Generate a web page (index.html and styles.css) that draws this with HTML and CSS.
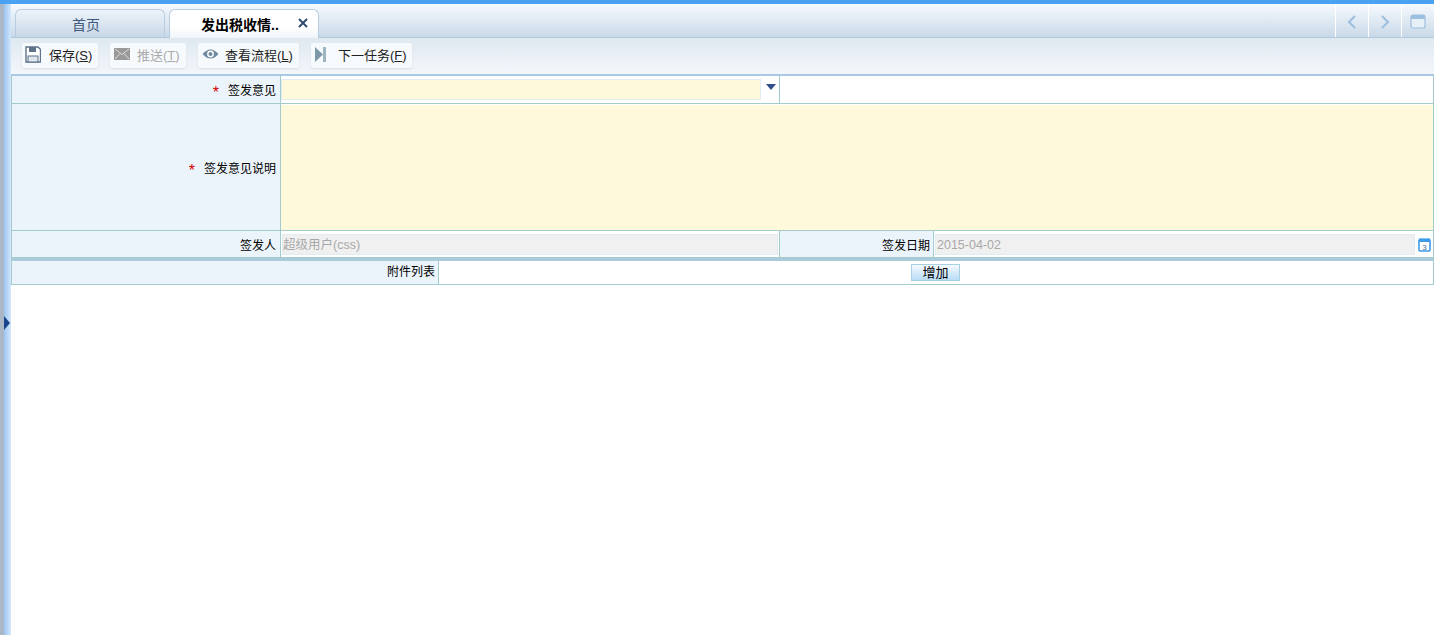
FILE: index.html
```html
<!DOCTYPE html>
<html lang="zh-CN">
<head>
    <meta charset="UTF-8">
    <title>发出税收情况</title>
    <link rel="stylesheet" href="styles.css">
</head>
<body>
    <div class="topline"></div>
    <div class="page">
        <div class="side">
            <span class="side-arrow"></span>
        </div>
        <div class="main">
            <div class="tabbar">
                <div class="tab">首页</div>
                <div class="tab active">
                    <span>发出税收情..</span>
                    <svg class="tab-close" width="10" height="10" viewBox="0 0 10 10"><path d="M1 1L9 9M9 1L1 9" stroke="#2f4b6e" stroke-width="2"/></svg>
                </div>
                <div class="tab-tools">
                    <div class="tool">
                        <svg width="10" height="14" viewBox="0 0 10 14"><path d="M8 1L2 7L8 13" fill="none" stroke="#9dbfdf" stroke-width="2"/></svg>
                    </div>
                    <div class="tool">
                        <svg width="10" height="14" viewBox="0 0 10 14"><path d="M2 1L8 7L2 13" fill="none" stroke="#9dbfdf" stroke-width="2"/></svg>
                    </div>
                    <div class="tool">
                        <svg width="16" height="15" viewBox="0 0 16 15"><rect x="1" y="1" width="14" height="13" rx="2" fill="#e8f0f7" stroke="#9dbfdf" stroke-width="1.2"/><rect x="1" y="1" width="14" height="4" fill="#9dbfdf"/></svg>
                    </div>
                </div>
            </div>
            <div class="toolbar">
                <a class="btn btn-s">
                    <svg class="icon-save" width="16" height="17" viewBox="0 0 16 17"><path d="M1 1H13L15.5 3.5V16H1Z" fill="#fff" stroke="#5d7389" stroke-width="1.4"/><rect x="4" y="1" width="7" height="5" fill="#5d7389"/><rect x="3" y="10" width="10" height="6" fill="#dfe6ec" stroke="#5d7389"/></svg>
                    <span class="btn-text">保存(<u>S</u>)</span>
                </a>
                <a class="btn btn-s disabled">
                    <svg width="16" height="12" viewBox="0 0 16 12"><rect width="16" height="12" fill="#999"/><path d="M1 1L8 6.5L15 1M1 11L6 5.5M15 11L10 5.5" fill="none" stroke="#ddd"/></svg>
                    <span class="btn-text">推送(<u>T</u>)</span>
                </a>
                <a class="btn btn-l">
                    <svg width="17" height="12" viewBox="0 0 17 12"><path d="M0.5 6Q8.5 -3 16.5 6Q8.5 15 0.5 6Z" fill="#6f8a9e"/><circle cx="8.5" cy="6" r="3.4" fill="#fff"/><circle cx="8.5" cy="6" r="2" fill="#6f8a9e"/></svg>
                    <span class="btn-text">查看流程(<u>L</u>)</span>
                </a>
                <a class="btn btn-l">
                    <svg width="12" height="15" viewBox="0 0 12 15"><path d="M0 0L8 7.5L0 15Z" fill="#7d98a8"/><rect x="8" y="0" width="3" height="15" fill="#9fb4c1"/></svg>
                    <span class="btn-text">下一任务(<u>F</u>)</span>
                </a>
            </div>
            <div class="toolbar-line"></div>

            <table class="form-table">
                <colgroup>
                    <col class="col-label">
                    <col class="col-field">
                    <col class="col-label2">
                    <col>
                </colgroup>
                <tr class="row-select">
                    <th><span class="req">*</span>签发意见</th>
                    <td>
                        <div class="select">
                            <div class="input required"></div>
                            <span class="select-arrow"></span>
                        </div>
                    </td>
                    <td colspan="2" class="blank"></td>
                </tr>
                <tr class="row-text">
                    <th><span class="req">*</span>签发意见说明</th>
                    <td colspan="3" class="text-cell"><div class="textarea"></div></td>
                </tr>
                <tr class="row-readonly">
                    <th>签发人</th>
                    <td><div class="input readonly">超级用户(css)</div></td>
                    <th class="th-date">签发日期</th>
                    <td>
                        <div class="date">
                            <div class="input readonly">2015-04-02</div>
                            <svg width="13" height="15" viewBox="0 0 13 15"><rect x="1" y="2.5" width="11" height="11.5" rx="1" fill="#fff" stroke="#3f9ae8" stroke-width="1.6"/><rect x="1" y="1.5" width="11" height="3.5" fill="#3f9ae8"/><text x="6.5" y="12.5" font-size="8" text-anchor="middle" fill="#4a6f90">3</text></svg>
                        </div>
                    </td>
                </tr>
            </table>

            <div class="attach">
                <div class="attach-label">附件列表</div>
                <div class="attach-body"><button class="add">增加</button></div>
            </div>
        </div>
    </div>
</body>
</html>
```

FILE: styles.css
```css
html, body {
    height: 100%;
}

body {
    margin: 0;
    background-color: #fff;
    font-family: "Liberation Sans", "Noto Sans CJK SC", sans-serif;
    font-size: 12px;
    color: #000;
    overflow: hidden;
}

.topline {
    height: 4px;
    background-color: #4aa3f2;
}

.page {
    display: flex;
    height: 631px;
}

.side {
    position: relative;
    flex: 0 0 7px;
    margin-left: 4px;
    background: linear-gradient(to right, #9cc4ee, #d3e8fd);
    box-shadow: -4px 0 0 #a9b7c6;
}

.side-arrow {
    position: absolute;
    left: 0;
    top: 312px;
    border-left: 6px solid #17468a;
    border-top: 7px solid transparent;
    border-bottom: 7px solid transparent;
}

.main {
    flex: 1;
    min-width: 0;
}

/* tabs */
.tabbar {
    display: flex;
    height: 34px;
    box-sizing: border-box;
    padding: 5px 0 0 4px;
    background: linear-gradient(to bottom, #f6fafe, #c9d9e8);
    border-bottom: 1px solid #b2cade;
}

.tab {
    width: 150px;
    height: 28px;
    box-sizing: border-box;
    margin-right: 4px;
    padding-right: 8px;
    border: 1px solid #b9cde0;
    border-bottom: none;
    border-radius: 6px 6px 0 0;
    background: linear-gradient(to bottom, #edf3f9, #c8d8e7);
    color: #3f5a80;
    font-size: 14px;
    line-height: 30px;
    text-align: center;
}

.tab.active {
    position: relative;
    height: 29px;
    background: linear-gradient(to bottom, #fff 60%, #f0f5fa);
    color: #000;
    font-weight: bold;
}

.tab-close {
    position: absolute;
    right: 10px;
    top: 8px;
}

.tab-tools {
    display: flex;
    margin-left: auto;
    margin-top: -5px;
}

.tool {
    display: flex;
    align-items: center;
    justify-content: center;
    width: 32px;
    padding-top: 2px;
    border-left: 1px solid #fff;
}

/* toolbar */
.toolbar {
    display: flex;
    gap: 12px;
    height: 36px;
    box-sizing: border-box;
    padding: 5px 0 0 11px;
    background: linear-gradient(to bottom, #dfe8f0, #f3f7fb);
}

.btn {
    display: grid;
    grid-template-columns: 23px 1fr;
    align-items: center;
    height: 25px;
    box-sizing: border-box;
    padding: 0 0 3px 4px;
    background-color: #f7fafd;
    box-shadow: 0 1px 2px #d8dfe6;
    border-radius: 2px;
    color: #222;
    font-size: 13px;
}

.btn-s {
    width: 76px;
}

.btn-l {
    width: 101px;
}

.icon-save {
    margin-left: -1px;
}

.btn.disabled {
    color: #aaa;
}

.btn-text {
    white-space: nowrap;
}

.toolbar-line {
    height: 1px;
    background-color: #a9c9e6;
}

/* form */
.form-table {
    width: 1423px;
    border-collapse: collapse;
    table-layout: fixed;
}

.col-label {
    width: 269px;
}

.col-field {
    width: 499px;
}

.col-label2 {
    width: 154px;
}

.form-table th,
.form-table td {
    padding: 0;
    border: 1px solid #a3cbcb;
}

.form-table tr:first-child th,
.form-table tr:first-child td {
    border-top-color: #a9c9e6;
}

.form-table th {
    padding-right: 4px;
    background-color: #ecf4fb;
    font-weight: normal;
    text-align: right;
}

.form-table .th-date {
    padding-right: 3px;
}

.req {
    margin-right: 9px;
    color: #d40000;
    font-size: 16px;
    line-height: 0;
    vertical-align: -3px;
}

.row-select {
    height: 28px;
}

.row-text {
    height: 127px;
}

.row-readonly {
    height: 27px;
}

.select {
    display: flex;
    align-items: center;
}

.select-arrow {
    margin-left: 5px;
    margin-top: -5px;
    border-top: 6px solid #2f4f8a;
    border-left: 5.5px solid transparent;
    border-right: 5.5px solid transparent;
}

.input {
    flex: 1;
    height: 21px;
    line-height: 20px;
    box-sizing: border-box;
    border: 1px solid #e2ecf3;
}

.input.required {
    flex: 0 0 480px;
    background-color: #fff9dc;
}

.input.readonly {
    margin: 0 1px;
    background-color: #f0f0f0;
    color: #a8a8a8;
    font-size: 12.5px;
}

.date .input.readonly {
    padding-left: 1px;
}

.text-cell {
    padding-top: 1px;
}

.textarea {
    height: 125px;
    background-color: #fff9dc;
}

.date {
    display: flex;
    align-items: center;
    gap: 2px;
}

.date svg {
    flex: none;
    margin-right: 2px;
}

.attach {
    display: flex;
    width: 1423px;
    height: 27px;
    box-sizing: border-box;
    border: 1px solid #a3cbcb;
    border-top: 3px solid #a9cbdc;
}

.attach-label {
    box-sizing: border-box;
    width: 427px;
    padding-right: 3px;
    background-color: #ecf4fb;
    border-right: 1px solid #a3cbcb;
    line-height: 23px;
    text-align: right;
}

.attach-body {
    flex: 1;
}

.add {
    display: block;
    width: 49px;
    height: 17px;
    margin: 3px 0 0 472px;
    padding: 0;
    border: 1px solid #a8d0e4;
    background: linear-gradient(to bottom, #f4faff, #b9dcf6);
    font-family: inherit;
    font-size: 13px;
    line-height: 15px;
    color: #000;
}
```
